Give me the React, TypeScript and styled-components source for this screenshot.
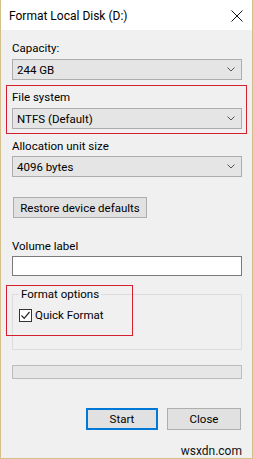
import React from "react";
import styled, { createGlobalStyle } from "styled-components";

const Global = createGlobalStyle`
  html, body { margin: 0; padding: 0; background: #ffffff; }
  * { box-sizing: border-box; }
`;

const Window = styled.div`
  width: 253px;
  height: 459px;
  display: flex;
  flex-direction: column;
  border: 1px solid #d3c08c;
  border-top: none;
  background: #f0f0f0;
  font-family: Roboto, "Segoe UI", sans-serif;
  font-size: 11.5px;
  color: #000;
  overflow: hidden;
`;

const TitleBar = styled.div`
  height: 30px;
  background: #ffffff;
  display: flex;
  align-items: center;
  justify-content: space-between;
  padding: 0 9px 0 8px;
  flex-shrink: 0;
`;

const Title = styled.span`
  font-size: 12px;
  line-height: 16px;
  padding-top: 1px;
`;

const CloseX = styled.svg`
  width: 12px;
  height: 12px;
  margin-top: 1px;
`;

const Body = styled.div`
  flex: 1;
  display: flex;
  flex-direction: column;
  padding: 0 10px 0 11px;
`;

const Label = styled.div<{ $top: number; $bottom: number }>`
  line-height: 16px;
  margin-top: ${(p) => p.$top}px;
  margin-bottom: ${(p) => p.$bottom}px;
`;

const Combo = styled.div`
  height: 21px;
  background: #e5e5e5;
  border: 1px solid #adadad;
  display: flex;
  align-items: center;
  justify-content: space-between;
  padding: 0 6px 0 4px;
  line-height: 16px;
`;

const Chevron = styled.svg`
  width: 8px;
  height: 5px;
`;

const Highlight = styled.div`
  margin: 5px -5px 0 -6px;
  border: 1px solid #d3202f;
  padding: 0 4px 4px 5px;
`;

const RestoreButton = styled.div`
  align-self: flex-start;
  margin: 20px 0 0 1px;
  width: 134px;
  height: 21px;
  background: #e1e1e1;
  border: 1px solid #adadad;
  display: flex;
  align-items: center;
  justify-content: center;
  line-height: 16px;
`;

const TextBox = styled.div`
  height: 20px;
  background: #ffffff;
  border: 1px solid #7a7a7a;
`;

const GroupWrap = styled.div`
  position: relative;
  margin-top: 10px;
  height: 64px;
`;

const GroupBox = styled.fieldset`
  margin: 0;
  height: 64px;
  border: 1px solid #dcdcdc;
  padding: 0 0 0 6px;
  min-width: 0;
`;

const Legend = styled.legend`
  padding: 0 2px 0 2px;
  margin-left: 0;
  line-height: 16px;
`;

const CheckRow = styled.label`
  display: flex;
  align-items: center;
  gap: 3px;
  margin-top: 5px;
  line-height: 16px;
`;

const CheckBox = styled.span`
  width: 13px;
  height: 13px;
  border: 1px solid #333333;
  background: #ffffff;
  display: flex;
  align-items: center;
  justify-content: center;
`;

const Annotation = styled.div`
  position: absolute;
  left: -6px;
  top: -1px;
  width: 127px;
  height: 51px;
  border: 1px solid #d3202f;
  pointer-events: none;
`;

const Progress = styled.div`
  margin-top: 15px;
  height: 14px;
  background: #e6e6e6;
  border: 1px solid #bcbcbc;
`;

const ButtonRow = styled.div`
  display: flex;
  justify-content: flex-end;
  gap: 9px;
  margin-top: 29px;
  padding-right: 1px;
`;

const DialogButton = styled.div<{ $default?: boolean }>`
  width: ${(p) => (p.$default ? 72 : 74)}px;
  height: 22px;
  background: #e1e1e1;
  border: ${(p) => (p.$default ? "2px solid #0078d7" : "1px solid #adadad")};
  display: flex;
  align-items: center;
  justify-content: center;
  line-height: 16px;
`;

const Watermark = styled.div`
  align-self: flex-end;
  margin-top: 14px;
  font-size: 12px;
  line-height: 14px;
  color: #111;
`;

const ComboField = ({ value }: { value: string }) => (
  <Combo>
    <span>{value}</span>
    <Chevron viewBox="0 0 8 5">
      <path d="M0.5 0.5 L4 4 L7.5 0.5" fill="none" stroke="#555" strokeWidth="1" />
    </Chevron>
  </Combo>
);

export default function App() {
  return (
    <>
      <Global />
      <Window>
        <TitleBar>
          <Title>Format Local Disk (D:)</Title>
          <CloseX viewBox="0 0 12 12">
            <path d="M0.5 0.5 L11.5 11.5 M11.5 0.5 L0.5 11.5" stroke="#111" strokeWidth="1" />
          </CloseX>
        </TitleBar>
        <Body>
          <Label $top={10} $bottom={3}>Capacity:</Label>
          <ComboField value="244 GB" />
          <Highlight>
            <Label $top={3} $bottom={3}>File system</Label>
            <ComboField value="NTFS (Default)" />
          </Highlight>
          <Label $top={4} $bottom={2}>Allocation unit size</Label>
          <ComboField value="4096 bytes" />
          <RestoreButton>Restore device defaults</RestoreButton>
          <Label $top={20} $bottom={2}>Volume label</Label>
          <TextBox />
          <GroupWrap>
            <GroupBox>
              <Legend>Format options</Legend>
              <CheckRow>
                <CheckBox>
                  <svg width="11" height="11" viewBox="0 0 11 11">
                    <path d="M1.5 5.5 L4.2 8.3 L9.5 2" fill="none" stroke="#222" strokeWidth="1.2" />
                  </svg>
                </CheckBox>
                Quick Format
              </CheckRow>
            </GroupBox>
            <Annotation />
          </GroupWrap>
          <Progress />
          <ButtonRow>
            <DialogButton $default>Start</DialogButton>
            <DialogButton>Close</DialogButton>
          </ButtonRow>
          <Watermark>wsxdn.com</Watermark>
        </Body>
      </Window>
    </>
  );
}
